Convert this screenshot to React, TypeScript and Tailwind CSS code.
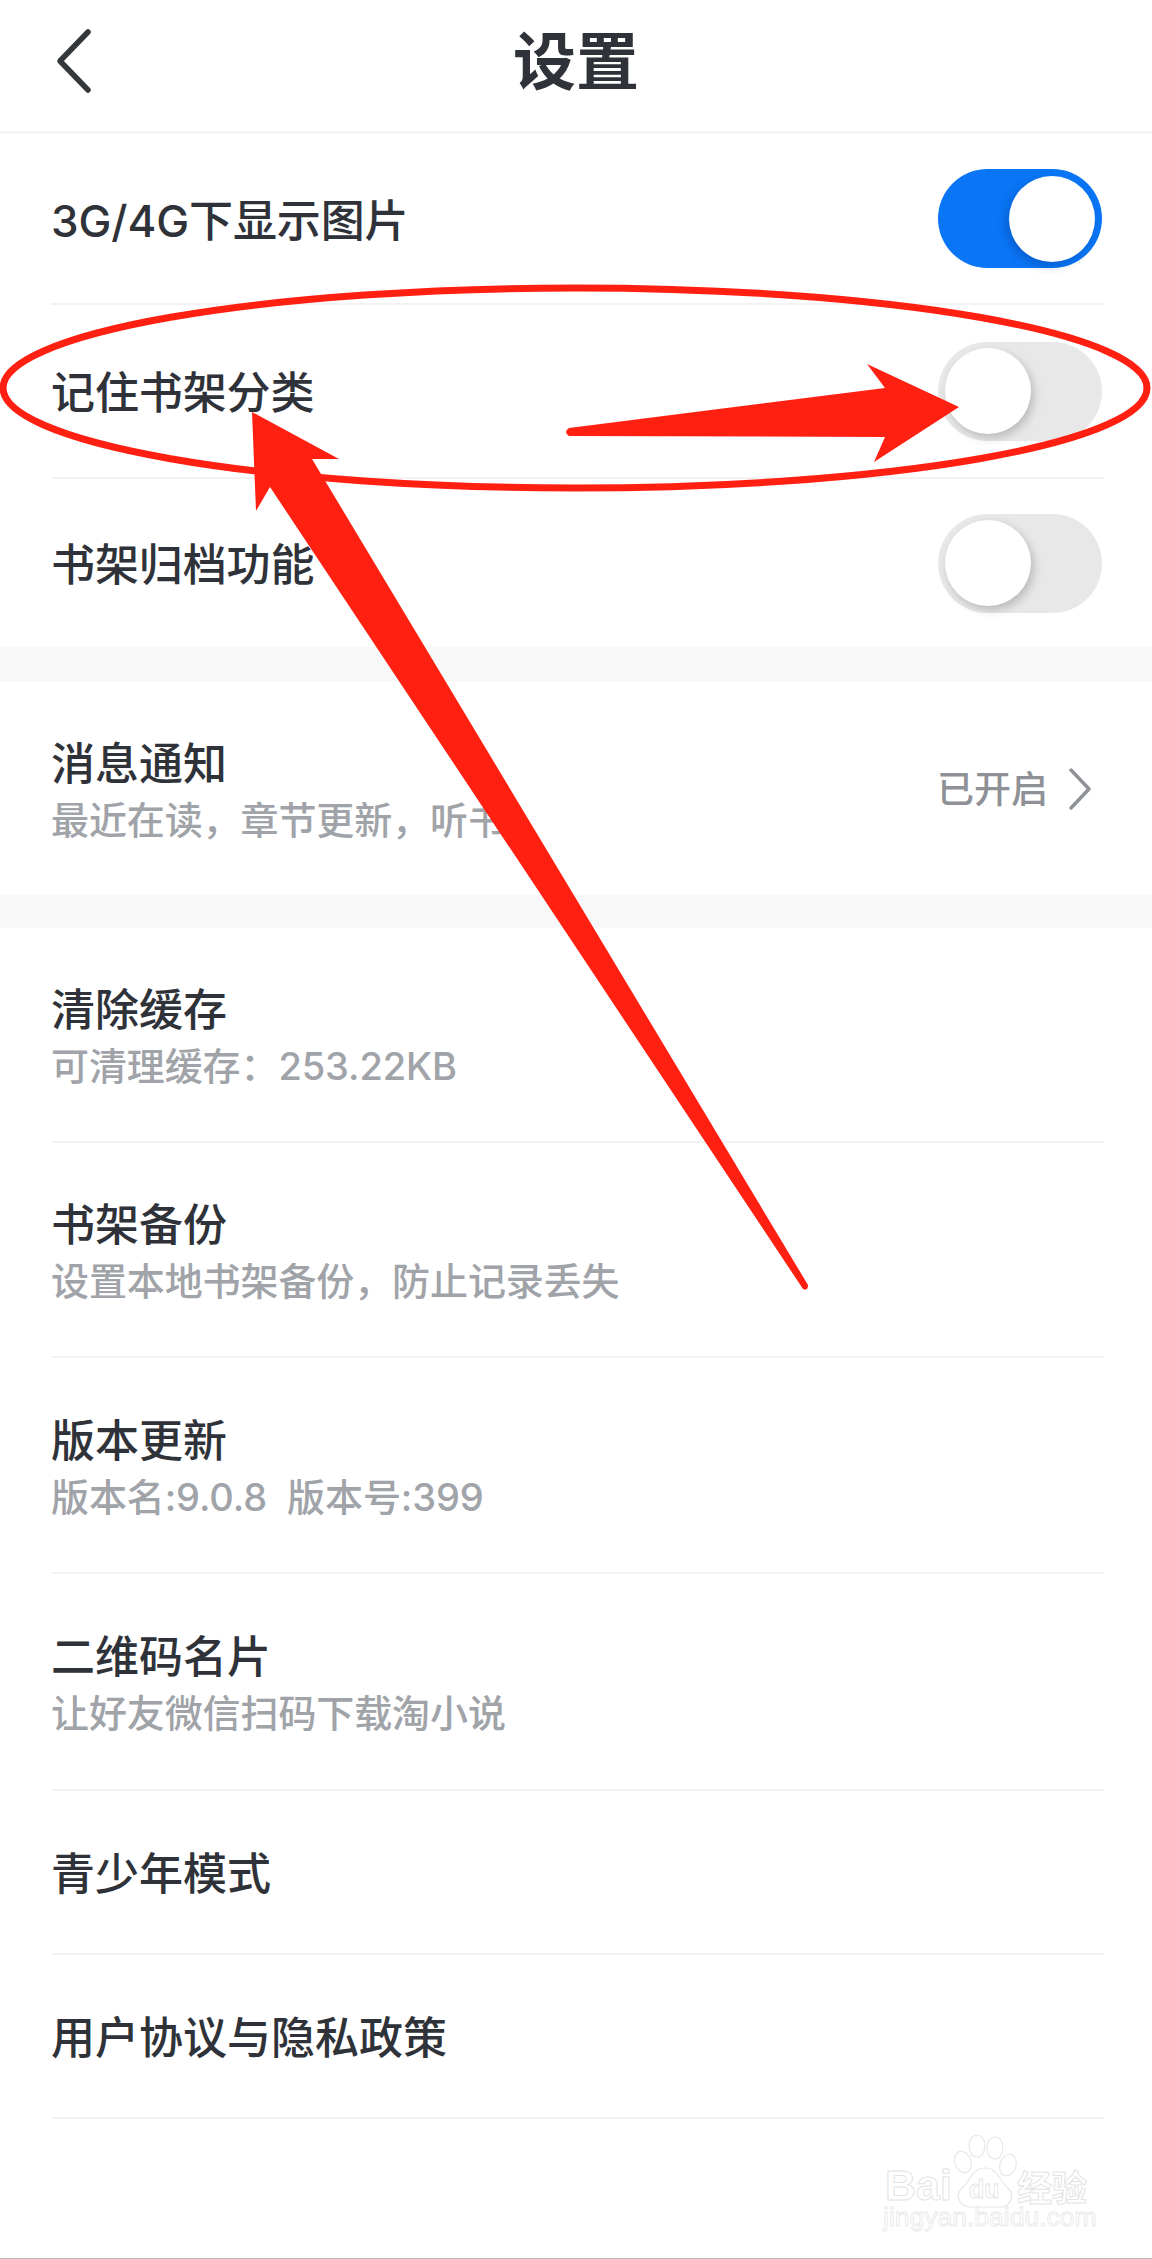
const FONT = "font-['Inter','Noto_Sans_CJK_SC',sans-serif]";

function Toggle({ on }: { on?: boolean }) {
  return (
    <div
      className={`flex h-[99px] w-[164px] items-center rounded-full px-[7px] ${
        on ? 'justify-end bg-[#0a76f5]' : 'justify-start bg-[#e8e8e8]'
      }`}
    >
      <div
        className={`h-[86px] w-[86px] rounded-full bg-white ${
          on ? 'shadow-[-3px_4px_10px_rgba(0,40,120,0.3)]' : 'shadow-[3px_4px_10px_rgba(0,0,0,0.2)]'
        }`}
      />
    </div>
  );
}

function Divider() {
  return <div className="mx-[51px] h-[2px] w-[1053px] bg-[#f3f3f3]" />;
}

function ToggleRow({ title, on, h }: { title: string; on?: boolean; h: string }) {
  return (
    <div className={`flex items-center justify-between pl-[51px] pr-[50px] ${h}`}>
      <span className="pt-[4px] text-[44px] font-medium leading-[50px] tracking-[-0.1px] text-[#2f3339]">{title}</span>
      <Toggle on={on} />
    </div>
  );
}

function InfoRow({ title, sub, h }: { title: string; sub: string; h: string }) {
  return (
    <div className={`flex flex-col justify-center pl-[51px] pt-[7px] ${h}`}>
      <div className="text-[44px] font-medium leading-[50px] text-[#2f3339]">{title}</div>
      <div className="mt-[6px] whitespace-pre text-[38px] font-medium leading-[50px] tracking-[-0.1px] text-[#a0a3a8]">{sub}</div>
    </div>
  );
}

function PlainRow({ title, h }: { title: string; h: string }) {
  return (
    <div className={`flex items-center pl-[51px] pt-[4px] ${h}`}>
      <span className="text-[44px] font-medium leading-[50px] text-[#2f3339]">{title}</span>
    </div>
  );
}

// red markup drawn on top of the screenshot
function Annotations() {
  return (
    <svg className="pointer-events-none absolute left-0 top-0" width="1152" height="2259" viewBox="0 0 1152 2259">
      <ellipse cx="575" cy="388" rx="572" ry="100" fill="none" stroke="#ff2012" strokeWidth="7" />
      <path
        d="M569 428 L885 388 L867 364 L959 407 L874 462 L885 437 L569 436 Q563 432 569 428 Z"
        fill="#ff2012"
      />
      <path
        d="M252 412 L339 459 L312 459 L808 1285 Q808 1291 803 1289 L270 487 L256 511 Z"
        fill="#ff2012"
      />
    </svg>
  );
}

function Watermark() {
  return (
    <svg className="absolute left-[880px] top-[2130px]" width="216" height="108" viewBox="0 0 216 108">
      <g fill="#fff" stroke="#e8e8e8" strokeWidth="1.2">
        <ellipse cx="83" cy="32" rx="8" ry="11" transform="rotate(-20 83 32)" />
        <ellipse cx="97" cy="16" rx="8" ry="11" />
        <ellipse cx="115" cy="18" rx="8" ry="11" />
        <ellipse cx="128" cy="35" rx="8" ry="11" transform="rotate(20 128 35)" />
        <path d="M105 38 C92 38 90 52 82 58 C74 66 80 78 92 77 L118 77 C130 78 136 66 128 58 C120 52 118 38 105 38 Z" />
      </g>
      <g fill="#fff" stroke="#e4e4e4" strokeWidth="1" fontFamily="'Liberation Sans', sans-serif" fontWeight="700">
        <text x="5" y="70" fontSize="43">Bai</text>
        <text x="89" y="68" fontSize="25" strokeWidth="0.8">du</text>
        <text x="137" y="71" fontSize="35" fontFamily="'Noto Sans CJK SC', sans-serif" fontWeight="700">经验</text>
      </g>
      <text x="3" y="96" fontSize="26.5" fill="#fff" stroke="#e8e8e8" strokeWidth="0.8" fontFamily="'Liberation Sans', sans-serif">
        jingyan.baidu.com
      </text>
    </svg>
  );
}

export default function App() {
  return (
    <div className={`relative h-[2259px] w-[1152px] overflow-hidden border-b border-b-[#bdbdbd] bg-white ${FONT}`}>
      {/* Header */}
      <div className="grid h-[134px] grid-cols-[1fr_auto_1fr] items-center border-b-[3px] border-b-[#f5f5f5] pb-[10px]">
        <svg className="ml-[54px]" width="40" height="66" viewBox="0 0 40 66" fill="none">
          <path d="M34 4 L6 33 L34 62" stroke="#34373c" strokeWidth="5.5" strokeLinecap="round" strokeLinejoin="round" />
        </svg>
        <span className="text-[63px] font-bold leading-[72px] text-[#2f3339]">设置</span>
        <div />
      </div>

      <ToggleRow title="3G/4G下显示图片" on h="h-[169px]" />
      <Divider />
      <ToggleRow title="记住书架分类" h="h-[172px]" />
      <Divider />
      <ToggleRow title="书架归档功能" h="h-[168px]" />

      <div className="h-[35px] bg-[#f8f8f9]" />

      {/* Notifications */}
      <div className="flex h-[213px] items-center justify-between pr-[60px]">
        <InfoRow title="消息通知" sub="最近在读，章节更新，听书" h="h-full" />
        <div className="flex items-center gap-[20px]">
          <span className="pt-[3px] text-[37px] font-medium leading-[50px] text-[#8e9196]">已开启</span>
          <svg width="24" height="44" viewBox="0 0 24 44" fill="none">
            <path d="M3 3 L21 22 L3 41" stroke="#8e9196" strokeWidth="3.5" strokeLinecap="round" strokeLinejoin="round" />
          </svg>
        </div>
      </div>

      <div className="h-[33px] bg-[#f8f8f9]" />

      <InfoRow title="清除缓存" sub="可清理缓存：253.22KB" h="h-[213px]" />
      <Divider />
      <InfoRow title="书架备份" sub="设置本地书架备份，防止记录丢失" h="h-[213px]" />
      <Divider />
      <InfoRow title="版本更新" sub="版本名:9.0.8  版本号:399" h="h-[214px]" />
      <Divider />
      <InfoRow title="二维码名片" sub="让好友微信扫码下载淘小说" h="h-[215px]" />
      <Divider />
      <PlainRow title="青少年模式" h="h-[162px]" />
      <Divider />
      <PlainRow title="用户协议与隐私政策" h="h-[162px]" />
      <Divider />

      <Watermark />
      <Annotations />
    </div>
  );
}
